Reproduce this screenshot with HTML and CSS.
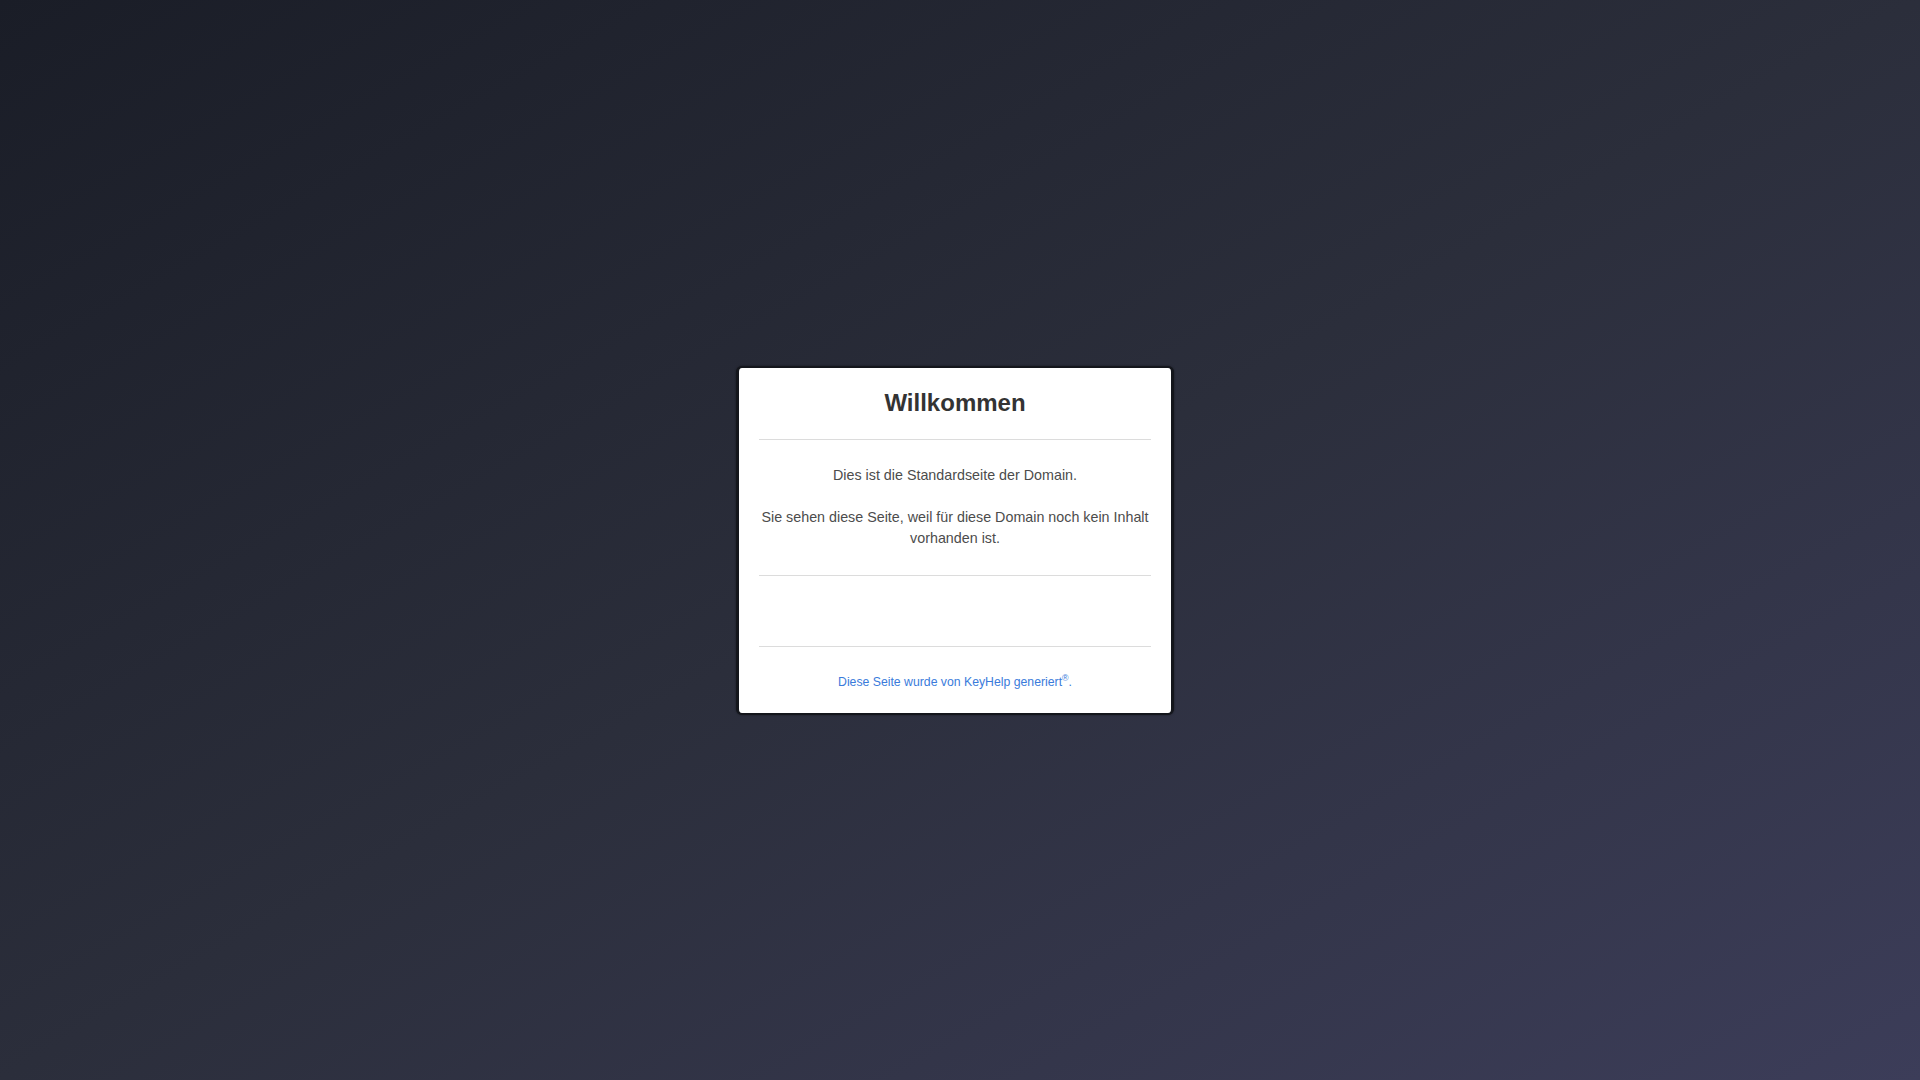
FILE: index.html
```html
<!DOCTYPE html>
<html lang="de">
<head>
<meta charset="utf-8">
<title>Willkommen</title>
<link rel="stylesheet" href="styles.css">
</head>
<body>
<main class="stage">
  <section class="card">
    <h1 class="card-title">Willkommen</h1>
    <hr class="rule">
    <div class="card-body">
      <p class="text">Dies ist die Standardseite der Domain.</p>
      <p class="text">Sie sehen diese Seite, weil für diese Domain noch kein Inhalt vorhanden ist.</p>
    </div>
    <hr class="rule">
    <div class="card-empty"></div>
    <hr class="rule">
    <footer class="card-footer">
      <a class="footer-link" href="#">Diese Seite wurde von KeyHelp generiert<sup class="reg">®</sup>.</a>
    </footer>
  </section>
</main>
</body>
</html>
```

FILE: styles.css
```css
html, body {
  margin: 0;
  padding: 0;
  height: 100%;
}

body {
  background: linear-gradient(to bottom right, #1a1d27 0%, #2b2e3b 50%, #3c3d59 100%);
  font-family: "Liberation Sans", Arial, sans-serif;
  color: #4c4c4c;
}

.stage {
  box-sizing: border-box;
  height: 100%;
  padding-right: 10px;
  display: flex;
  align-items: center;
  justify-content: center;
}

.card {
  box-sizing: border-box;
  width: 438px;
  background: #fff;
  border-style: solid;
  border-color: #14161c;
  border-width: 2px 3px;
  border-radius: 6px;
  box-shadow: 0 0 2px rgba(0, 0, 0, 0.5);
  padding: 0 20px;
  text-align: center;
}

.card-title {
  margin: 0;
  padding-top: 21px;
  margin-bottom: 22px;
  font-size: 24px;
  line-height: 28px;
  font-weight: bold;
  color: #333;
}

.rule {
  margin: 0;
  border: 0;
  border-top: 1px solid #dcdcdc;
  height: 0;
}

.card-body {
  padding: 25px 0 26px;
}

.text {
  margin: 0;
  font-size: 14.3px;
  line-height: 21px;
  color: #4c4c4c;
}

.text + .text {
  margin-top: 21px;
}

.card-empty {
  height: 70px;
}

.card-footer {
  padding: 26px 0 22px;
  font-size: 12.25px;
  line-height: 18px;
}

.footer-link {
  color: #3a7bdb;
  text-decoration: none;
}

.reg {
  font-size: 72%;
  line-height: 0;
  vertical-align: super;
}
```
